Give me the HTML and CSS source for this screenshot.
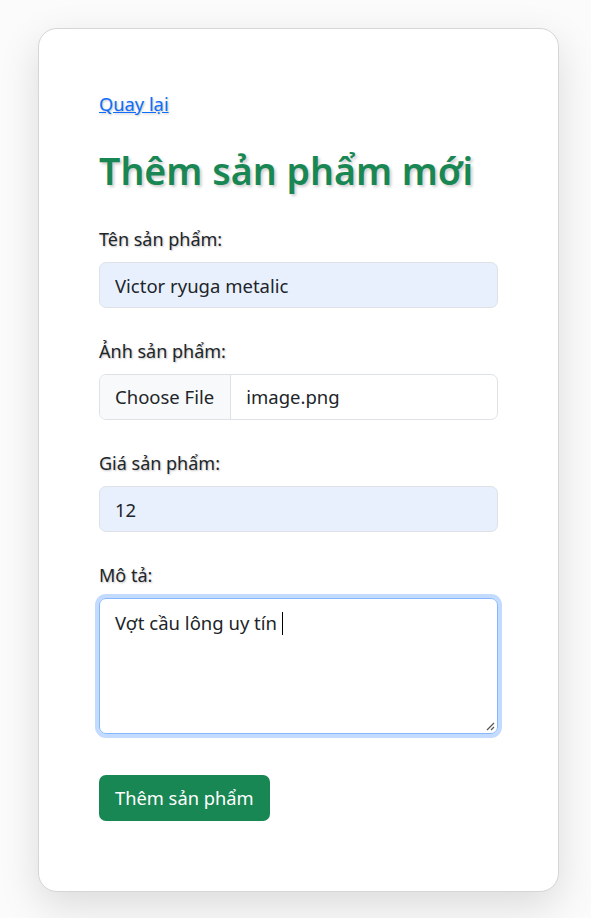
FILE: index.html
```html
<!DOCTYPE html>
<html lang="vi">
<head>
<meta charset="utf-8">
<title>Thêm sản phẩm mới</title>
<link rel="stylesheet" href="styles.css">
</head>
<body>
<main class="page">
  <section class="card">
    <a class="back-link" href="#">Quay lại</a>
    <h1 class="title">Thêm sản phẩm mới</h1>
    <form class="form">
      <div class="group">
        <label class="label" for="name">Tên sản phẩm:</label>
        <input class="control filled" id="name" type="text" value="Victor ryuga metalic">
      </div>
      <div class="group">
        <label class="label">Ảnh sản phẩm:</label>
        <div class="control file">
          <span class="file-btn">Choose File</span>
          <span class="file-name">image.png</span>
        </div>
      </div>
      <div class="group">
        <label class="label" for="price">Giá sản phẩm:</label>
        <input class="control filled" id="price" type="text" value="12">
      </div>
      <div class="group">
        <label class="label">Mô tả:</label>
        <div class="control area" role="textbox">Vợt cầu lông uy tín <span class="caret"></span>
          <svg class="grip" width="9" height="9" viewBox="0 0 9 9"><path d="M8 1 L1 8 M8 5 L5 8" stroke="#555" stroke-width="1.2" fill="none"/></svg>
        </div>
      </div>
      <button class="submit" type="button">Thêm sản phẩm</button>
    </form>
  </section>
</main>
</body>
</html>
```
FILE: styles.css
```css
* { box-sizing: border-box; }
html, body { margin: 0; padding: 0; }
body {
  background: #fbfbfb;
  font-family: "Noto Sans", "Open Sans", sans-serif;
  font-size: 18px;
  line-height: 1.5;
  color: #212529;
}
.page {
  padding: 28px 33px 40px 38px;
}
.card {
  width: 521px;
  background: #fff;
  border: 1px solid #d6d6d6;
  border-radius: 19px;
  box-shadow: 0 14px 40px rgba(0,0,0,0.13);
  padding: 60px 60px 70px;
}
.back-link {
  display: inline-block;
  color: #0d6efd;
  text-decoration: underline;
  line-height: 29px;
  font-size: 18.3px;
  text-shadow: 1px 1px 2px rgba(0,0,0,0.25);
}
.title {
  margin: 30px 0 32px;
  font-size: 37.6px;
  font-weight: 600;
  line-height: 1.2;
  color: #198754;
  white-space: nowrap;
  text-shadow: 2px 2px 3px rgba(0,0,0,0.2);
}
.form { display: flex; flex-direction: column; }
.group {
  display: flex;
  flex-direction: column;
  margin-bottom: 29px;
}
.label {
  line-height: 28px;
  margin-bottom: 9px;
  text-shadow: 1px 1px 2px rgba(0,0,0,0.25);
}
.control {
  width: 100%;
  height: 46px;
  border: 1px solid #dee2e6;
  border-radius: 7px;
  font: inherit;
  font-size: 18.5px;
  color: #212529;
  padding: 0 15px;
}
.filled { background: #e8f0fe; outline: none; }
.file {
  display: flex;
  align-items: stretch;
  padding: 0;
  overflow: hidden;
  background: #fff;
}
.file-btn {
  display: flex;
  align-items: center;
  padding: 0 16px 0 15px;
  background: #f8f9fa;
  border-right: 1px solid #dee2e6;
}
.file-name {
  display: flex;
  align-items: center;
  padding-left: 15px;
}
.area {
  position: relative;
  height: 136px;
  padding: 10px 15px;
  border-color: #86b7fe;
  box-shadow: 0 0 0 4px rgba(13,110,253,0.25);
  line-height: 1.5;
}
.caret {
  display: inline-block;
  width: 1px;
  height: 23px;
  background: #000;
  vertical-align: -5px;
}
.grip {
  position: absolute;
  right: 2px;
  bottom: 2px;
}
.submit {
  align-self: flex-start;
  margin-top: 12px;
  height: 46px;
  padding: 0 16px;
  border: 0;
  border-radius: 7px;
  background: #198754;
  color: #fff;
  font: inherit;
  font-size: 18.3px;
}
```
